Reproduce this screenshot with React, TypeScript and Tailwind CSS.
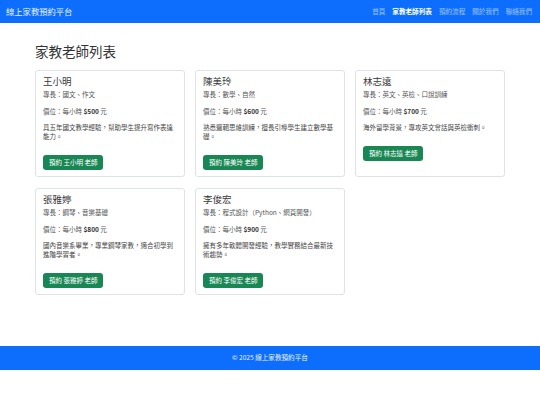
const teachers = [
  { name: '王小明', skill: '國文、作文', price: 500, desc: '具五年國文教學經驗，幫助學生提升寫作表達能力。' },
  { name: '陳美玲', skill: '數學、自然', price: 600, desc: '熟悉邏輯思維訓練，擅長引導學生建立數學基礎。' },
  { name: '林志遠', skill: '英文、英檢、口說訓練', price: 700, desc: '海外留學背景，專攻英文會話與英檢衝刺。' },
  { name: '張雅婷', skill: '鋼琴、音樂基礎', price: 800, desc: '國內音樂系畢業，專業鋼琴家教，適合初學到進階學習者。' },
  { name: '李俊宏', skill: '程式設計（Python、網頁開發）', price: 900, desc: '擁有多年軟體開發經驗，教學實務結合最新技術趨勢。' },
];

const navLinks = ['首頁', '家教老師列表', '預約流程', '關於我們', '聯絡我們'];

function TeacherCard({ t }: { t: (typeof teachers)[number] }) {
  return (
    <div className="flex flex-col rounded-[3px] border border-[#dfe2e6] bg-white px-[7px] pt-[5px] pb-[6px]">
      <h2 className="text-[9.5px] leading-[11px] text-[#3a3a3a]">{t.name}</h2>
      <p className="mt-[3px] text-[6.5px] leading-[9px] text-[#555]">專長：{t.skill}</p>
      <p className="mt-[8px] text-[6.5px] leading-[9px] text-[#555]">
        價位：每小時 <span className="font-bold text-[#333]">${t.price}</span> 元
      </p>
      <p className="mt-[7px] text-[6.5px] leading-[9px] text-[#444]">{t.desc}</p>
      <div className="mt-[14px] flex">
        <button className="h-[15px] rounded-[3px] bg-[#198754] px-[6px] text-[6.5px] leading-[15px] text-white">
          預約 {t.name} 老師
        </button>
      </div>
    </div>
  );
}

export default function App() {
  return (
    <div className="min-h-[405px] bg-white font-['Noto_Sans_CJK_TC','Liberation_Sans',sans-serif]">
      <nav className="flex h-[23px] items-center justify-between bg-[#0d6efd] pl-[6px] pr-[8px]">
        <span className="text-[8.3px] text-white/90">線上家教預約平台</span>
        <div className="flex items-center gap-[7px]">
          {navLinks.map(l => (
            <span
              key={l}
              className={`text-[6.6px] ${l === '家教老師列表' ? 'font-bold text-white' : 'text-white/55'}`}
            >
              {l}
            </span>
          ))}
        </div>
      </nav>

      <main className="mx-[35px] pt-[20px] pb-[51px]">
        <h1 className="mb-[11px] text-[13.5px] leading-[16px] text-[#333]">家教老師列表</h1>
        <div className="grid grid-cols-3 gap-x-[10px] gap-y-[11px]">
          {teachers.map(t => (
            <TeacherCard key={t.name} t={t} />
          ))}
        </div>
      </main>

      <footer className="flex h-[24px] items-center justify-center bg-[#0d6efd]">
        <p className="text-[6.6px] text-white/90">© 2025 線上家教預約平台</p>
      </footer>
    </div>
  );
}
